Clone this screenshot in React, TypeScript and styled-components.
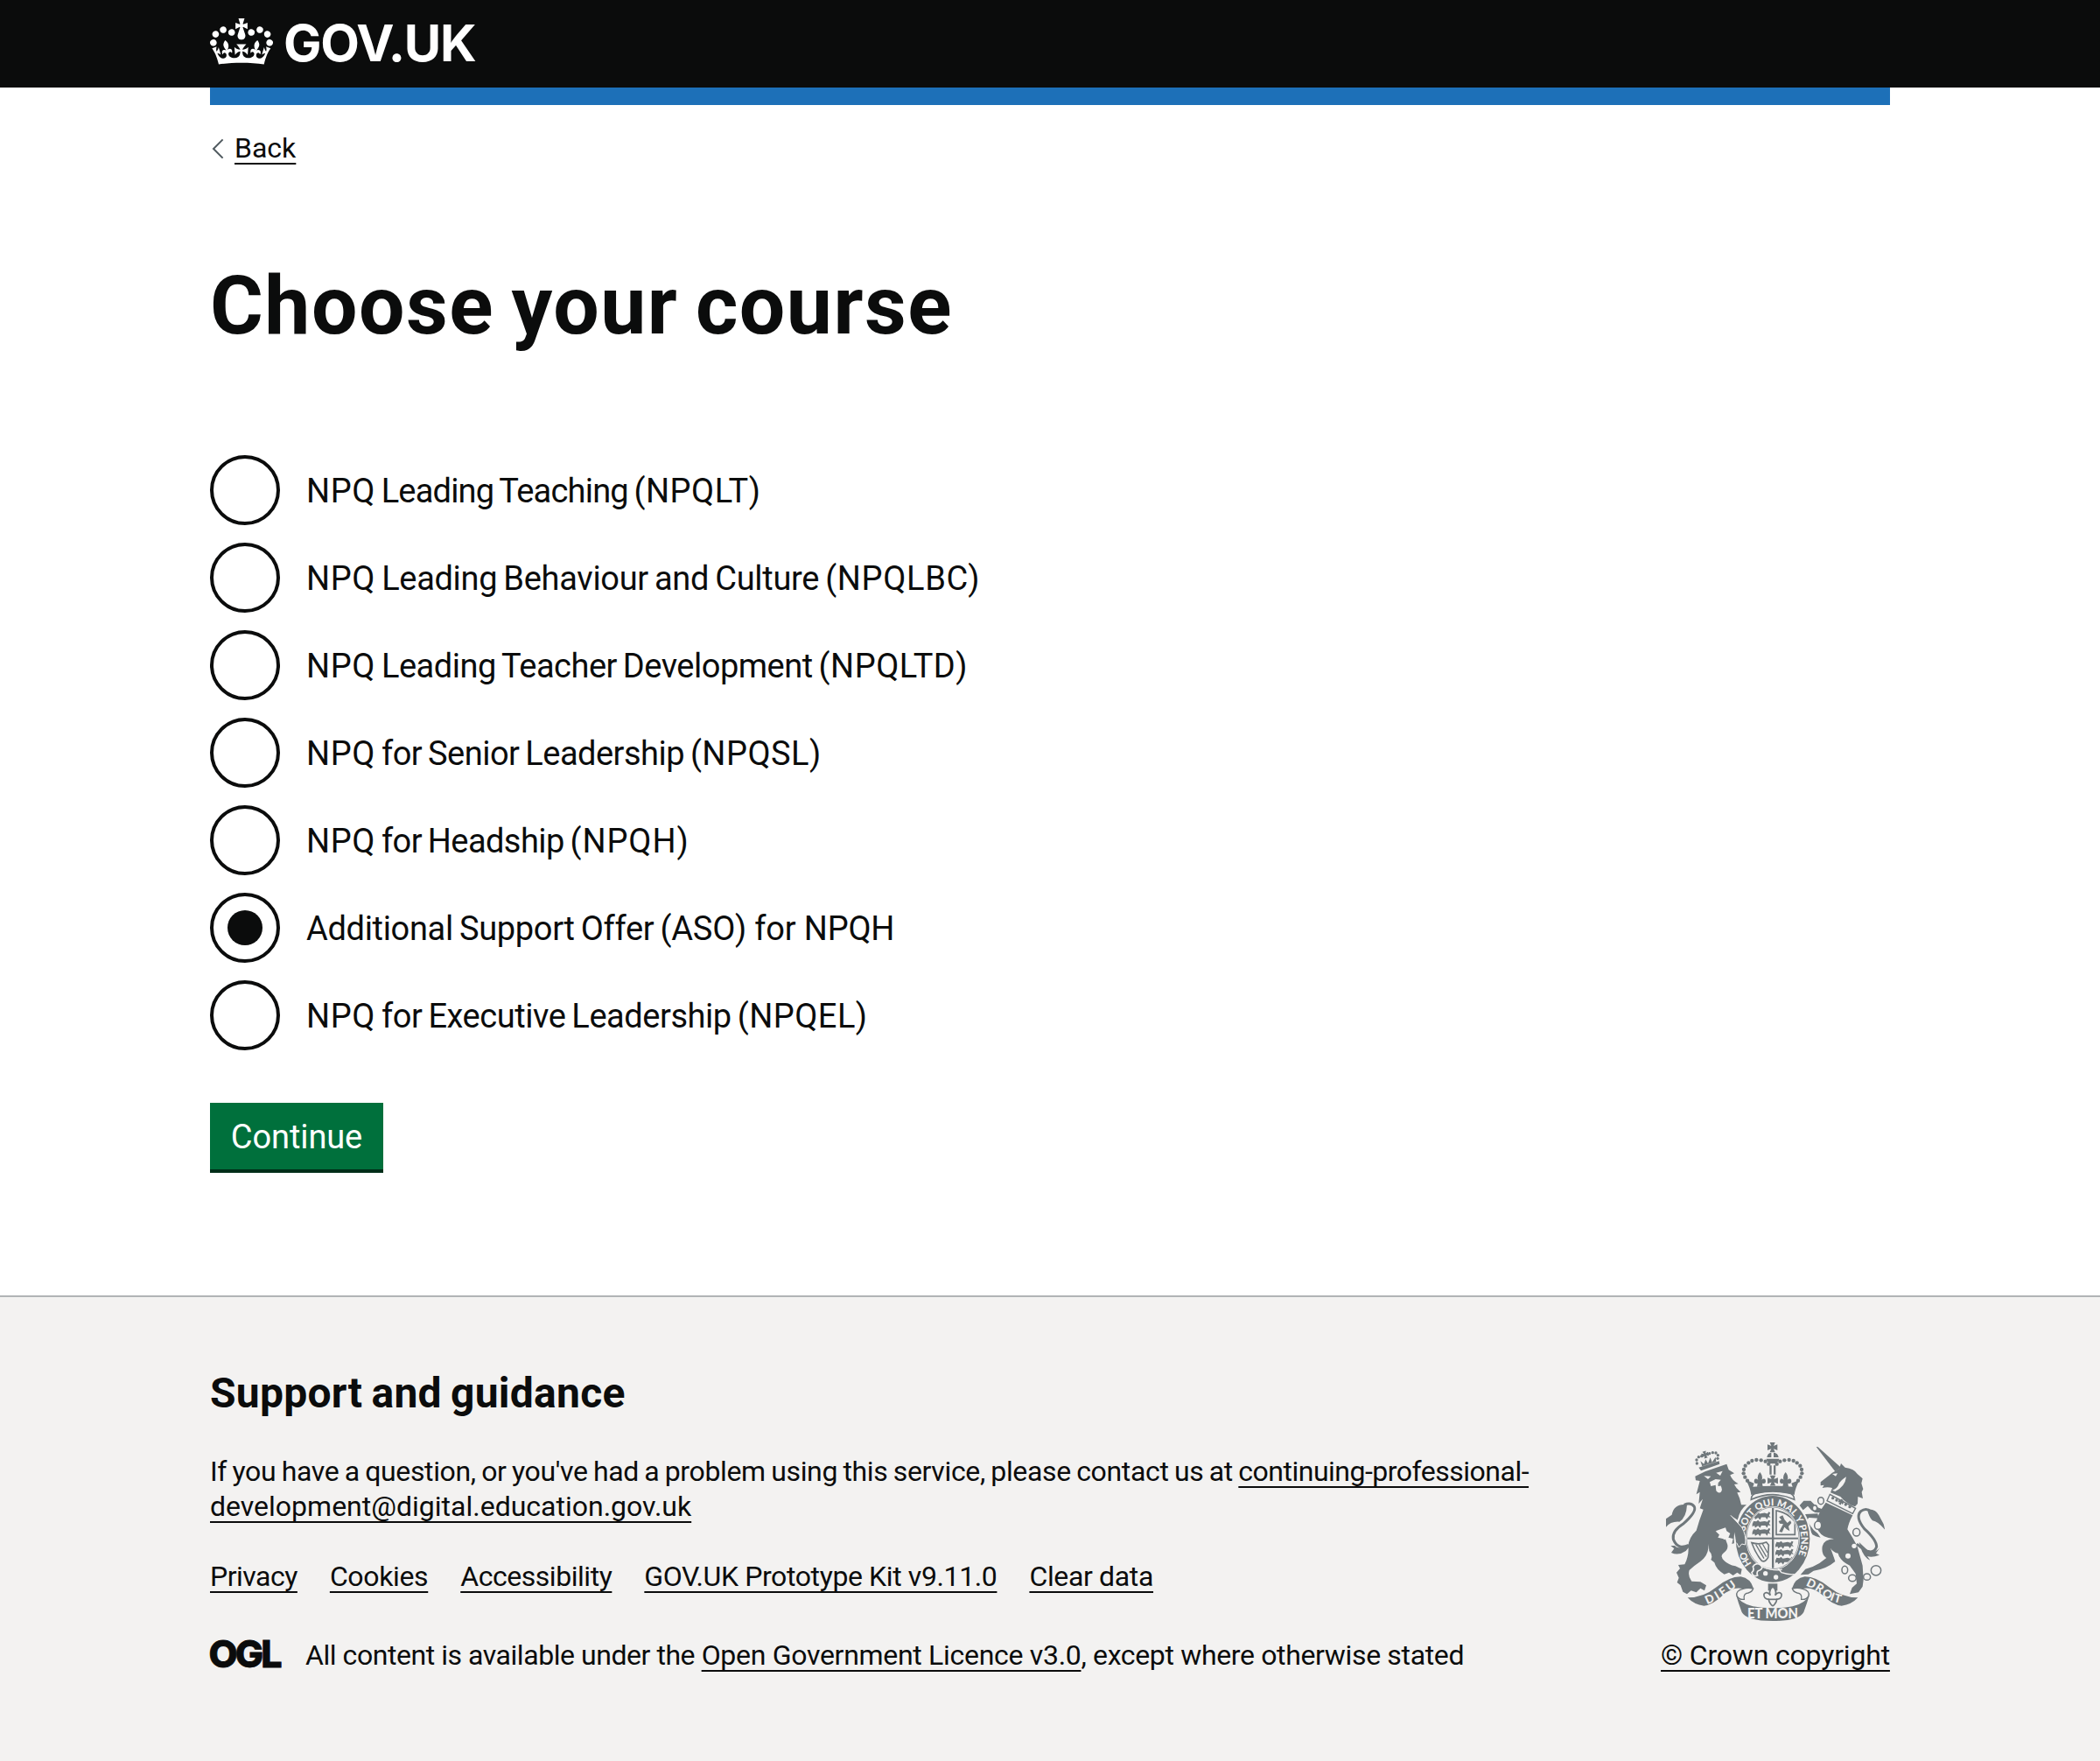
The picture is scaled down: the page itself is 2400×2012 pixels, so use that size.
import React, { useState } from 'react';
import styled, { createGlobalStyle } from 'styled-components';

const INK = '#0b0c0c';
const PAPER = '#f3f2f1';
const STONE = '#6f777b';

const GlobalStyle = createGlobalStyle`
  *, *::before, *::after { box-sizing: border-box; }
  body {
    margin: 0;
    background: #ffffff;
    color: ${INK};
    font-family: Roboto, 'Liberation Sans', sans-serif;
    font-kerning: normal;
  }
`;

const Page = styled.div`
  display: flex;
  flex-direction: column;
  min-height: 2012px;
`;

const Container = styled.div`
  width: 1920px;
  margin: 0 auto;
`;

const Header = styled.header`
  height: 100px;
  background: ${INK};
`;

const Brand = styled.a`
  display: flex;
  align-items: flex-start;
  gap: 12px;
  width: max-content;
  padding-top: 21px;
  color: #ffffff;
  text-decoration: none;
`;

const Wordmark = styled.span`
  font-family: Inter, 'Liberation Sans', sans-serif;
  font-size: 58px;
  font-weight: 700;
  line-height: 56px;
  letter-spacing: -1.3px;
`;

const AccentBar = styled.div`
  height: 20px;
  background: #1d70b8;
`;

const Main = styled.main`
  flex: 1;
`;

const Tracked = styled.span<{ $track?: number; $word?: number }>`
  letter-spacing: ${p => p.$track ?? 0}px;
  word-spacing: ${p => p.$word ?? 0}px;
`;

const Link = styled.a<{ $track?: number }>`
  color: ${INK};
  letter-spacing: ${p => p.$track ?? 0}px;
  text-decoration: underline;
  text-decoration-thickness: 2px;
  text-underline-offset: 6px;
  text-decoration-skip-ink: none;
`;

const BackRow = styled.div`
  display: flex;
  align-items: center;
  gap: 12px;
  height: 40px;
  margin-top: 29px;
  font-size: 32px;
  line-height: 40px;
`;

const Title = styled.h1`
  margin: 111px 0 120px;
  font-size: 93px;
  font-weight: 700;
  line-height: 100px;
  letter-spacing: 1.5px;
  word-spacing: -5px;
`;

const Options = styled.div`
  display: flex;
  flex-direction: column;
  gap: 20px;
`;

const Option = styled.label`
  display: flex;
  align-items: center;
  gap: 30px;
  height: 80px;
  font-size: 38px;
  cursor: pointer;
`;

const Radio = styled.input`
  appearance: none;
  display: grid;
  place-items: center;
  flex: none;
  width: 80px;
  height: 80px;
  margin: 0;
  border: 4px solid ${INK};
  border-radius: 50%;
  background: #ffffff;

  &:checked::before {
    content: '';
    width: 40px;
    height: 40px;
    border-radius: 50%;
    background: ${INK};
  }
`;

const OptionText = styled.span`
  padding-top: 2px;
  white-space: pre;
`;

const Continue = styled.button`
  display: block;
  width: 198px;
  height: 76px;
  margin: 60px 0 144px;
  padding: 2px 0 0;
  border: 0;
  background: #00703c;
  box-shadow: 0 4px 0 #002d18;
  color: #ffffff;
  font: 400 38px/48px Roboto, 'Liberation Sans', sans-serif;
  letter-spacing: -0.1px;
`;

const Footer = styled.footer`
  height: 532px;
  border-top: 2px solid #b1b4b6;
  background: ${PAPER};
  font-size: 32px;
  line-height: 40px;
`;

const FooterLayout = styled(Container)`
  display: flex;
  justify-content: space-between;
  align-items: flex-end;
  padding-top: 80px;
`;

const FooterMain = styled.div`
  width: 1560px;
`;

const FooterTitle = styled.h2`
  margin: 0 0 39px;
  font-size: 48px;
  font-weight: 700;
  line-height: 60px;
  letter-spacing: 0.25px;
  word-spacing: -2px;
`;

const Contact = styled.p`
  margin: 0 0 40px;
`;

const LinkList = styled.ul`
  display: flex;
  gap: 37px;
  margin: 0 0 50px;
  padding: 0;
  list-style: none;
`;

const Licence = styled.div`
  display: flex;
  align-items: flex-start;
  gap: 27px;
  white-space: nowrap;
`;

const OglMark = styled.svg`
  display: block;
  flex: none;
  margin-top: 1px;
`;

const Copyright = styled.a`
  display: flex;
  flex-direction: column;
  align-items: center;
  gap: 19px;
  width: 262px;
  color: ${INK};
  text-decoration: none;
  white-space: nowrap;
`;

const CopyrightText = styled(Link).attrs({ as: 'span' })``;

function Crown() {
  return (
    <svg width="72" height="53" viewBox="0 0 132 97" fill="#ffffff" aria-hidden="true">
      <path d="M25 30.2c3.5 1.5 7.7-.2 9.1-3.7 1.5-3.6-.2-7.8-3.9-9.2-3.6-1.4-7.6.3-9.1 3.9-1.4 3.5.3 7.5 3.9 9zM9 39.5c3.6 1.5 7.8-.2 9.2-3.7 1.5-3.6-.2-7.8-3.9-9.1-3.6-1.5-7.6.2-9.1 3.8-1.4 3.5.3 7.5 3.8 9zM4.4 57.2c3.5 1.5 7.7-.2 9.1-3.8 1.5-3.6-.2-7.7-3.9-9.1-3.5-1.5-7.6.3-9.1 3.8-1.4 3.5.3 7.6 3.9 9.1zm38.3-21.4c3.5 1.5 7.7-.2 9.1-3.8 1.5-3.6-.2-7.7-3.9-9.1-3.6-1.5-7.6.3-9.1 3.8-1.3 3.6.4 7.7 3.9 9.1zm64.4-5.6c-3.6 1.5-7.8-.2-9.1-3.7-1.5-3.6.2-7.8 3.8-9.2 3.6-1.4 7.7.3 9.2 3.9 1.3 3.5-.4 7.5-3.9 9zm15.9 9.3c-3.6 1.5-7.7-.2-9.1-3.7-1.5-3.6.2-7.8 3.7-9.1 3.6-1.5 7.7.2 9.2 3.8 1.5 3.5-.3 7.5-3.8 9zm4.7 17.7c-3.6 1.5-7.8-.2-9.2-3.8-1.5-3.6.2-7.7 3.9-9.1 3.6-1.5 7.7.3 9.2 3.8 1.3 3.5-.4 7.6-3.9 9.1zM89.3 35.8c-3.6 1.5-7.8-.2-9.2-3.8-1.4-3.6.2-7.7 3.9-9.1 3.6-1.5 7.7.3 9.2 3.8 1.4 3.6-.3 7.7-3.9 9.1zM69.7 17.7l8.9 4.7V9.3l-8.9 2.8c-.2-.3-.5-.6-.9-.9L72.4 0H59.6l3.5 11.2c-.3.3-.6.5-.9.9l-8.8-2.8v13.1l8.8-4.7c.3.3.6.7.9.9l-5 15.4v.1c-.2.8-.4 1.6-.4 2.4 0 4.1 3.1 7.5 7 8.1h.2c.3 0 .7.1 1 .1.4 0 .7 0 1-.1h.2c4-.6 7.1-4.1 7.1-8.1 0-.8-.1-1.7-.4-2.4V34l-5.1-15.4c.4-.2.7-.6 1-.9zM66 92.8c16.9 0 32.8 1.1 47.1 3.2 4-16.9 8.9-26.7 14-33.5l-9.6-3.4c1 4.9 1.1 7.2 0 10.2-1.5-1.4-3-4.3-4.2-8.7L108.6 76c2.8-2 5-3.2 7.5-3.3-4.4 9.4-10 11.9-13.6 11.2-4.3-.8-6.3-4.6-5.6-7.9 1-4.7 5.7-5.9 8-.5 4.3-8.7-3-11.4-7.6-8.8 7.1-7.2 7.9-13.5 2.1-21.1-8 6.1-8.1 12.3-4.5 20.8-4.7-5.4-12.1-2.5-9.5 6.2 3.4-5.2 7.9-2 7.2 3.1-.6 4.3-6.4 7.8-13.5 7.2-10.3-.9-10.9-8-11.2-13.8 2.5-.5 7.1 1.8 11 7.3L80.2 60c-4.1 4.4-8 5.3-12.3 5.4 1.4-4.4 8-11.6 8-11.6H55.5s6.4 7.2 7.9 11.6c-4.2-.1-8-1-12.3-5.4l1.4 16.4c3.9-5.5 8.5-7.7 10.9-7.3-.3 5.8-.9 12.8-11.1 13.8-7.2.6-12.9-2.9-13.5-7.2-.7-5 3.8-8.3 7.1-3.1 2.7-8.7-4.6-11.6-9.4-6.2 3.7-8.5 3.6-14.7-4.6-20.8-5.8 7.6-5 13.9 2.2 21.1-4.7-2.6-11.9.1-7.7 8.8 2.3-5.5 7.1-4.2 8.1.5.7 3.3-1.3 7.1-5.7 7.9-3.5.7-9-1.8-13.5-11.2 2.5.1 4.7 1.3 7.5 3.3l-4.7-15.4c-1.2 4.4-2.7 7.2-4.3 8.7-1.1-3-.9-5.3 0-10.2l-9.5 3.4c5 6.9 9.9 16.7 14 33.5 14.8-2.1 30.8-3.2 47.7-3.2z" />
    </svg>
  );
}

function Chevron() {
  return (
    <svg width="16" height="24" viewBox="0 0 16 24" aria-hidden="true">
      <path d="M14.6 2.4 4 13l10.600 10.600" fill="none" stroke="#505a5f" strokeWidth="2" />
    </svg>
  );
}

function Ogl() {
  return (
    <OglMark width="82" height="34" viewBox="0 0 82 34" overflow="visible" role="img">
      <text
        x="-1.500"
        y="32.500"
        fontFamily="Inter, sans-serif"
        fontWeight="850"
        fontSize="43"
        textLength="84"
        lengthAdjust="spacing"
        fill={INK}
        stroke={INK}
        strokeWidth="0.800"
      >
        OGL
      </text>
    </OglMark>
  );
}

const arcDots: [number, number][] = [
  [394, 128], [383, 119], [368, 115], [352, 114], [337, 117], [325, 124],
  [314, 134], [309, 147], [308, 160], [313, 173], [321, 185],
];

const lionCrownDots: [number, number][] = [
  [148, 126], [147, 114], [154, 104], [164, 101], [191, 92], [202, 89], [213, 90], [220, 98], [219, 109],
];

const chainRings: [number, number, number, number][] = [
  [573, 254, 10, 12], [552, 279, 8, 10], [563, 338, 12, 14], [695, 362, 12, 13],
  [655, 491, 10, 13], [681, 519, 13, 11], [731, 515, 12, 11], [762, 493, 17, 17],
];

const PASSANT = 'M0 11 3 3l7 1 4-4 4 5 12-2 7 2 3-5 4 2-3 8 4 6-6-2-3 7-4-6-10 0-3 7-5-6-7 5-2-6-5 3z';
const FLEUR = 'M0-26Q12-12 6 0 18-8 20 4 20 16 8 12L10 24H-10L-8 12Q-20 16-20 4-18-8-6 0-12-12 0-26Z';
const CROSS = 'M-9-17H9L4-5 17-10V10L4 5 9 17H-9L-4 5-17 10V-10L-4-5Z';

function Scroll() {
  return (
    <>
      <path d="M116 586Q170 586 212 552 258 514 298 514 332 520 342 554 322 550 306 556 274 546 238 577 202 612 172 614 138 610 116 586Z" />
      <path
        d="M341 555Q322 550 306 556 280 562 285 580 292 594 310 592 306 572 324 570 338 566 341 555Z"
        fill={PAPER}
        stroke={STONE}
        strokeWidth="4"
      />
      <path d="M282 576Q296 606 340 616 370 622 408 622V666Q318 666 302 636 290 604 282 576Z" />
    </>
  );
}

function Crest() {
  return (
    <svg width="250" height="204" viewBox="42 54 750 612" fill={STONE} role="img">
      <defs>
        <path id="garter" d="M336 470A97 114 0 0 1 311 385 97 114 0 0 1 408 271 97 114 0 0 1 505 385 97 114 0 0 1 462 485" />
        <path id="dieu" d="M183 609Q228 594 300 535" />
        <path id="droit" d="M520 544Q560 560 590 588 614 602 660 609" />
        <clipPath id="shield"><ellipse cx="408" cy="382" rx="87" ry="103" /></clipPath>
      </defs>

      {/* Lion */}
      <path d="M120 406Q82 424 67 386 62 358 100 334 148 292 139 274 128 258 104 268" fill="none" stroke={STONE} strokeWidth="9" />
      <path d="M114 268Q70 262 62 302L42 316V344Q58 324 88 326 112 312 114 268Z" />
      <path d="M58 408 70 418 60 432Q84 444 110 426L128 404 102 410Q82 420 72 408Z" />
      <path d="M142 170 176 154 250 128 257 148 276 160 262 166Q268 184 290 196L276 198Q282 212 298 224L286 226Q296 245 300 268L318 268Q294 285 288 320L262 304 302 345Q316 370 314 405L300 400 292 414 280 398 268 402 272 384 256 380 262 366 250 358 246 346Q228 352 212 358L226 368 220 380 246 386 252 402Q258 420 238 434 226 444 242 460 256 474 280 478L302 488 298 508 286 500 272 510 258 500 242 506Q214 490 208 466L196 456Q204 440 190 426L188 400Q190 440 160 462 136 478 122 492 116 512 130 530L160 532 180 544 174 562 160 554 146 568 128 562 114 574 100 566 92 544 80 534 86 518 78 500 90 486 84 474 106 472Q122 440 118 410 120 380 146 356 156 320 170 284L158 280 168 248 154 264 158 224 146 232 158 186 144 184Z" />
      <g fill={PAPER}>
        <path d="M172 169 196 170 186 180Z" />
        <path d="M214 158 236 152 228 168Z" />
        <path d="M192 190 212 180 230 182 220 194Q238 206 232 222 224 232 214 220L212 200 196 204Z" />
        <path d="M214 360 240 356 254 376 242 388Z" />
      </g>
      <circle cx="224" cy="200" r="4" />
      <path d="M154 140 224 118 226 128 162 151ZM166 136 160 118 172 128 178 112 186 126 194 106 200 122 212 104 214 120Z" />
      <path d={CROSS} transform="translate(176 96) rotate(-16) scale(.7)" />
      {lionCrownDots.map(([x, y]) => <circle key={`${x}-${y}`} cx={x} cy={y} r="5" />)}

      {/* Unicorn */}
      <path d="M557 69 563 70 642 140 622 154Z" />
      <path d="M572 190 600 168 612 158 636 144 642 126 656 140Q688 144 698 162L716 178 712 194 718 214 713 224 717 246 700 240 699 264 690 274Q662 266 640 240L606 226 612 210Q596 206 578 210L584 200 572 202Z" />
      <path d="M612 162 630 160 624 170ZM622 222Q656 206 660 172 640 184 634 198 630 212 612 218Z" fill={PAPER} />
      <path d="M604 232 692 280 682 298 594 254Z" fill={PAPER} stroke={STONE} strokeWidth="4" />
      <path d={CROSS} transform="translate(642 258) rotate(28) scale(.55)" />
      {[[614, 245], [627, 252], [658, 267], [672, 275]].map(([x, y]) => <circle key={x} cx={x} cy={y} r="5" />)}
      <path d="M590 260 682 304Q668 330 664 352 682 380 698 410 706 440 716 476L719 525 716 548 702 568 672 574 680 552 696 538 692 504 672 476Q638 460 632 434 614 430 606 416 618 448 622 462 592 488 548 494L530 506 503 508 520 488 545 480 568 468 592 450Q574 440 578 410 584 386 618 385 602 384 584 376 560 360 556 335 560 300 590 260Z" />
      <path d="M586 286Q560 304 540 286L528 272 512 286 500 270 514 254 538 254 560 276Z" />
      <path d="M566 314 532 312 524 322 548 354 562 366 572 380 556 376 544 370 534 350 510 318 520 300 562 298Z" />
      <path d="M696 402Q750 450 764 412 764 388 722 350 690 310 710 290 728 276 746 292" fill="none" stroke={STONE} strokeWidth="9" />
      <path d="M732 284Q760 280 772 304L788 334 793 354Q768 324 750 322 738 310 732 284Z" />
      <path d="M704 396 735 425Q755 436 774 416L762 434 774 440Q748 450 732 444L742 458Q716 448 704 396Z" />
      {chainRings.map(([x, y, rx, ry]) => (
        <ellipse key={`${x}-${y}`} cx={x} cy={y} rx={rx} ry={ry} fill={PAPER} stroke={STONE} strokeWidth="4.500" />
      ))}
      <circle cx="687" cy="409" r="8" fill={PAPER} />
      <circle cx="666" cy="443" r="9" fill={PAPER} />

      {/* Garter and shield */}
      <ellipse cx="408" cy="385" rx="133" ry="154" fill={PAPER} />
      <ellipse cx="408" cy="385" rx="127" ry="148" />
      <ellipse cx="408" cy="382" rx="93" ry="109" fill={PAPER} />
      <g clipPath="url(#shield)">
        <rect x="405" y="270" width="7" height="220" />
        <rect x="310" y="380" width="190" height="6" />
        {[292, 320, 348].map(y => <path key={y} d={PASSANT} transform={`translate(338 ${y}) scale(1.400 1.250)`} />)}
        {[392, 419, 446].map(y => <path key={y} d={PASSANT} transform={`translate(417 ${y}) scale(1.400 1.200)`} />)}
        <path d="M420 288V370H484V326Q460 294 420 288Z" fill="none" stroke={STONE} strokeWidth="5" />
        <path d="M430 310 442 304 448 318 458 330 468 322 472 330 462 342 466 358 456 352 448 344 440 362 430 360 436 348 444 334 432 332 428 324 438 320Z" />
        <path d="M336 398Q362 406 386 396L394 406 392 448Q382 466 370 460 350 436 336 398Z" fill="none" stroke={STONE} strokeWidth="5" />
        <path d="M350 404 378 452M361 404 386 446M373 402 390 432" stroke={STONE} strokeWidth="4" />
      </g>
      <ellipse cx="408" cy="382" rx="90" ry="106" fill="none" stroke={STONE} strokeWidth="2" />
      <path d="M366 478Q400 504 446 484L484 500Q440 540 366 518Z" />
      <path d="M372 480Q410 496 440 490M426 486 438 500Q462 508 482 506" fill="none" stroke={PAPER} strokeWidth="4" />
      <circle cx="383" cy="503" r="8" fill={PAPER} />
      <circle cx="419" cy="516" r="8" fill={PAPER} />
      <path d="M340 480Q350 464 366 474 378 484 364 492 350 494 356 510 340 516 336 500 346 492 340 480Z" fill={STONE} stroke={PAPER} strokeWidth="5" />
      <g fill={PAPER} fontFamily="Lato, sans-serif" fontWeight="900">
        <text fontSize="33"><textPath href="#garter" startOffset="0" textLength="48">HO</textPath></text>
        <text fontSize="33"><textPath href="#garter" startOffset="116" textLength="362">SOIT QUI MAL Y PENSE</textPath></text>
      </g>
      <path d="M264 304 302 345Q318 372 314 405L302 402 292 414 284 398" stroke={PAPER} strokeWidth="3" />

      {/* Royal crown */}
      <path d="M334 250Q334 230 354 228 408 216 464 228 482 232 482 250 408 216 334 250Z" fill={PAPER} stroke={STONE} strokeWidth="5" />
      <path d={CROSS} transform="translate(407 71)" />
      <path d="M388 105Q390 90 403 89V105ZM411 89Q426 90 428 105H411ZM386 110H430Q428 126 408 127 388 126 386 110Z" />
      <path d="M397 133H404V164H397ZM411 133H418V164H411Z" />
      {arcDots.map(([x, y]) => (
        <React.Fragment key={`${x}-${y}`}>
          <circle cx={x} cy={y} r="6.500" />
          <circle cx={816 - x} cy={y} r="6.500" />
        </React.Fragment>
      ))}
      <path d={FLEUR} transform="translate(364 182)" />
      <path d={FLEUR} transform="translate(452 182)" />
      <path d={CROSS} transform="translate(408 185) scale(1.050)" />
      <path d="M316 182 344 194 340 206Q370 203 408 203 446 203 476 206L472 194 500 182Q484 212 482 234 408 212 334 234 332 212 316 182Z" />

      {/* Scroll and pendant */}
      <Scroll />
      <g transform="translate(816 0) scale(-1 1)"><Scroll /></g>
      <path d="M392 538H424V562H392Z" />
      <path
        d="M408 548Q424 562 416 578 430 562 438 574 440 590 422 592L420 600Q412 614 408 614 404 614 396 600L394 592Q376 590 378 574 386 562 400 578 392 562 408 548Z"
        fill={PAPER}
        stroke={STONE}
        strokeWidth="5"
      />
      <path d="M392 592H424" stroke={STONE} strokeWidth="5" />
      <g fill={PAPER} fontFamily="Lato, sans-serif" fontWeight="900">
        <text fontSize="40"><textPath href="#dieu" textLength="120">DIEU</textPath></text>
        <text fontSize="40"><textPath href="#droit" textLength="136">DROIT</textPath></text>
        <text x="321" y="656" fontSize="48" textLength="174" lengthAdjust="spacingAndGlyphs">ET MON</text>
      </g>
    </svg>
  );
}

interface Course {
  award: string;
  name: string;
  code: string;
  nameTrack: number;
  codeTrack: number;
}

const courses: Course[] = [
  { award: 'NPQ', name: ' Leading Teaching ', code: '(NPQLT)', nameTrack: -0.8, codeTrack: 0.5 },
  { award: 'NPQ', name: ' Leading Behaviour and Culture ', code: '(NPQLBC)', nameTrack: -0.31, codeTrack: 0.65 },
  { award: 'NPQ', name: ' Leading Teacher Development ', code: '(NPQLTD)', nameTrack: -0.5, codeTrack: 0.5 },
  { award: 'NPQ', name: ' for Senior Leadership ', code: '(NPQSL)', nameTrack: -0.52, codeTrack: 0.47 },
  { award: 'NPQ', name: ' for Headship ', code: '(NPQH)', nameTrack: -0.57, codeTrack: 0.9 },
  { award: '', name: 'Additional Support Offer ', code: '(ASO) for NPQH', nameTrack: -0.33, codeTrack: -0.2 },
  { award: 'NPQ', name: ' for Executive Leadership ', code: '(NPQEL)', nameTrack: -0.45, codeTrack: 0.47 },
];

const footerLinks: { name: string; track: number }[] = [
  { name: 'Privacy', track: -0.5 },
  { name: 'Cookies', track: -0.35 },
  { name: 'Accessibility', track: -0.46 },
  { name: 'GOV.UK Prototype Kit v9.11.0', track: -0.39 },
  { name: 'Clear data', track: -0.35 },
];

export default function App() {
  const [selected, setSelected] = useState(5);

  return (
    <Page>
      <GlobalStyle />
      <Header>
        <Container>
          <Brand href="#">
            <Crown />
            <Wordmark>GOV.UK</Wordmark>
          </Brand>
        </Container>
      </Header>
      <Container>
        <AccentBar />
      </Container>
      <Main>
        <Container>
          <BackRow>
            <Chevron />
            <Link href="#">Back</Link>
          </BackRow>
          <Title>Choose your course</Title>
          <Options role="radiogroup">
            {courses.map((course, i) => (
              <Option key={course.code}>
                <Radio type="radio" name="course" checked={i === selected} onChange={() => setSelected(i)} />
                <OptionText>
                  {course.award && <Tracked $track={0.6}>{course.award}</Tracked>}
                  <Tracked $track={course.nameTrack} $word={-2}>{course.name}</Tracked>
                  <Tracked $track={course.codeTrack}>{course.code}</Tracked>
                </OptionText>
              </Option>
            ))}
          </Options>
          <Continue type="button">Continue</Continue>
        </Container>
      </Main>
      <Footer>
        <FooterLayout>
          <FooterMain>
            <FooterTitle>Support and guidance</FooterTitle>
            <Contact>
              <Tracked $track={-0.35} $word={-1.2}>
                If you have a question, or you've had a problem using this service, please contact us at{' '}
              </Tracked>
              <Link href="#">
                <Tracked $track={-0.5}>continuing-professional-</Tracked>
                <wbr />
                development@digital.education.gov.uk
              </Link>
            </Contact>
            <LinkList>
              {footerLinks.map(link => (
                <li key={link.name}>
                  <Link href="#" $track={link.track}>{link.name}</Link>
                </li>
              ))}
            </LinkList>
            <Licence>
              <Ogl />
              <span>
                <Tracked $track={-0.45}>All content is available under the </Tracked>
                <Link href="#" $track={-0.3}>Open Government Licence v3.0</Link>
                <Tracked $track={-0.35}>, except where otherwise stated</Tracked>
              </span>
            </Licence>
          </FooterMain>
          <Copyright href="#">
            <Crest />
            <CopyrightText $track={-0.18}>© Crown copyright</CopyrightText>
          </Copyright>
        </FooterLayout>
      </Footer>
    </Page>
  );
}
